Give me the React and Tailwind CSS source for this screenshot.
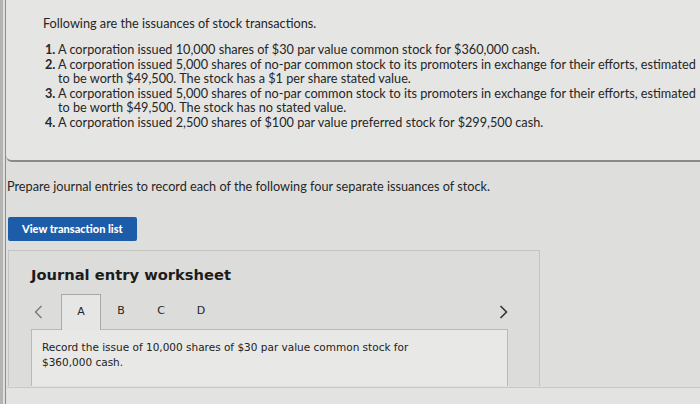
const items = [
  {
    n: "1.",
    text: "A corporation issued 10,000 shares of $30 par value common stock for $360,000 cash.",
  },
  {
    n: "2.",
    text: "A corporation issued 5,000 shares of no-par common stock to its promoters in exchange for their efforts, estimated to be worth $49,500. The stock has a $1 per share stated value.",
  },
  {
    n: "3.",
    text: "A corporation issued 5,000 shares of no-par common stock to its promoters in exchange for their efforts, estimated to be worth $49,500. The stock has no stated value.",
  },
  {
    n: "4.",
    text: "A corporation issued 2,500 shares of $100 par value preferred stock for $299,500 cash.",
  },
];

const tabs = ["A", "B", "C", "D"];

export default function App() {
  return (
    <div className="w-[700px] h-[404px] overflow-hidden bg-[#dededc] border-l-[3px] border-[#b4b4b2] text-[#262626]">
      <div className="ml-[2px] h-full flex flex-col border-l border-[#8e8e8c]">
        <div className="h-[162px] shrink-0 bg-[#e5e5e3] border-b-2 border-[#8a8a88] rounded-bl-[6px] pl-[37px] pt-[16px] font-['Lato',sans-serif] text-[12.7px]">
          <p className="leading-[15px]">Following are the issuances of stock transactions.</p>
          <ol className="mt-[11px] pl-[2px] leading-[14.6px]">
            {items.map((it) => (
              <li key={it.n} className="flex">
                <span className="w-[13px] shrink-0 font-bold">{it.n}</span>
                <span>{it.text}</span>
              </li>
            ))}
          </ol>
        </div>

        <div className="flex-1 flex flex-col pl-[1px]">
          <p className="mt-[17px] font-['Lato',sans-serif] text-[12.7px] leading-[15px]">
            Prepare journal entries to record each of the following four separate issuances of stock.
          </p>

          <button className="mt-[23px] ml-[1px] w-[129px] h-[24px] shrink-0 rounded-[2px] bg-[#1d5ca8] text-white font-['Lato',sans-serif] font-black text-[11px] text-left pl-[14px]">
            View transaction list
          </button>

          <div className="mt-[9px] ml-[1px] w-[532px] h-[136px] shrink-0 border border-b-0 border-[#c4c4c2] bg-[#dcdcda] flex flex-col">
            <h2 className="pl-[22px] pt-[14px] font-['DejaVu_Sans',sans-serif] font-bold text-[14.7px] leading-[20px] text-[#1c1c1c]">
              Journal entry worksheet
            </h2>

            <div className="mt-[9px] ml-[22px] mr-[31px] h-[35px] flex items-stretch">
              <div className="w-[30px] flex items-center justify-start pl-[3px]">
                <svg width="9" height="14" viewBox="0 0 9 14" fill="none" stroke="#7a7a7a" strokeWidth="1.4">
                  <path d="M7.5 1 L1.5 7 L7.5 13" />
                </svg>
              </div>
              {tabs.map((t, i) => (
                <div
                  key={t}
                  className={
                    i === 0
                      ? "w-[40px] -mb-px flex items-center justify-center border border-b-0 border-[#a9a9a7] bg-[#e6e6e4] font-['DejaVu_Sans',sans-serif] text-[11px] z-10"
                      : "w-[40px] flex items-center justify-center font-['DejaVu_Sans',sans-serif] text-[11px]"
                  }
                >
                  {t}
                </div>
              ))}
              <div className="flex-1 flex items-center justify-end">
                <svg width="9" height="14" viewBox="0 0 9 14" fill="none" stroke="#333333" strokeWidth="1.6">
                  <path d="M1.5 1 L7.5 7 L1.5 13" />
                </svg>
              </div>
            </div>

            <div className="ml-[22px] w-[477px] flex-1 border border-b-0 border-[#b9b9b7] bg-[#e8e8e6] pl-[10px] pt-[10px] font-['DejaVu_Sans',sans-serif] text-[10.5px] leading-[15px] text-[#222]">
              <p>Record the issue of 10,000 shares of $30 par value common stock for</p>
              <p>$360,000 cash.</p>
            </div>
          </div>

          <div className="mt-px border-t border-[#c9c9c7] flex-1 bg-[#e3e3e1]" />
        </div>
      </div>
    </div>
  );
}
